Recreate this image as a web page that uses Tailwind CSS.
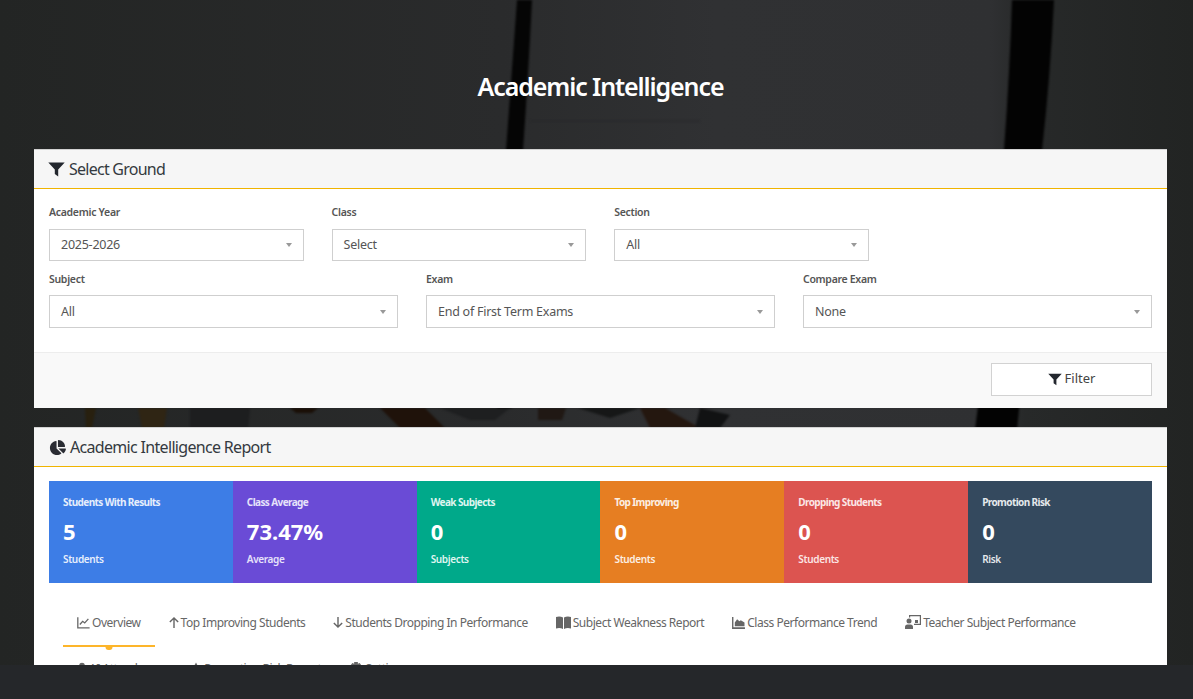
<!DOCTYPE html>
<html lang="en">
<head>
<meta charset="utf-8">
<title>Academic Intelligence</title>
<script src="https://cdn.jsdelivr.net/npm/@tailwindcss/browser@4"></script>
</head>
<body class="bg-[#25272a] font-['Noto_Sans',sans-serif] h-[699px] overflow-hidden">

<div class="relative h-[665px] overflow-hidden bg-[#2a2b2d]">
    <!-- backdrop photo stand-in -->
    <svg class="absolute inset-0 w-full h-full" viewBox="0 0 1193 665" preserveAspectRatio="none" aria-hidden="true">
        <defs>
            <linearGradient id="bg-fade" x1="0" y1="0" x2="1" y2="0">
                <stop offset="0" stop-color="#232524" />
                <stop offset="0.42" stop-color="#2a2b2c" />
                <stop offset="0.6" stop-color="#303133" />
                <stop offset="0.83" stop-color="#2f3032" />
                <stop offset="0.86" stop-color="#272929" />
                <stop offset="1" stop-color="#222423" />
            </linearGradient>
        </defs>
        <rect width="1193" height="665" fill="url(#bg-fade)" />
        <g class="blur-[1px]">
            <path d="M517 0H532Q528 80 523 150L512 408H497L506 150Q512 70 517 0Z" fill="#050505" />
            <path d="M1012 0H1054Q1050 80 1042 150Q1030 300 1017 430H975Q992 300 1004 150Q1010 70 1012 0Z" fill="#030303" />
            <path d="M530 121H700" stroke="#262728" stroke-width="1" />
            <path d="M85 408H96L92 428H86Z" fill="#28200f" />
            <path d="M138 408H167L164 428H142Z" fill="#2f2514" />
            <path d="M190 408H250L248 428H190Z" fill="#1d1e1f" />
            <path d="M290 408H318L312 413H296Z" fill="#1a0f07" />
            <path d="M380 408H425L445 428H400Z" fill="#1f120a" />
            <path d="M440 408H510L495 420H470Z" fill="#1e1f20" />
            <path d="M538 408H566L562 420H538Z" fill="#201814" />
            <path d="M578 408H640L610 418Z" fill="#161717" />
            <path d="M640 408H665L700 428H650Z" fill="#24170f" />
            <path d="M695 428H720L730 415L700 408Z" fill="#111213" />
        </g>
    </svg>

    <div class="relative pl-[34px] pr-[26px] pt-[68px]">
        <h1 class="text-center text-[25px] leading-[36px] font-semibold text-white tracking-[-1.1px] mb-[45px]">Academic Intelligence</h1>

        <section class="bg-white border-t border-[#d2d2d2] mb-[19px]">
            <header class="h-[39px] flex items-center gap-1 px-[14px] bg-[#f6f6f6] border-b border-[#f0b400]">
                <svg class="w-[17px] h-[15px] text-[#23272e]" viewBox="0 0 17 15" fill="currentColor"><path d="M.3 .5H16.700L10.200 7.500V14.500L6.800 12V7.500Z"/></svg>
                <span class="text-[16px] text-[#343a40] tracking-[-0.75px]">Select Ground</span>
            </header>

            <div class="px-[15px] pt-[16px] pb-[24px] border-b border-[#ededed]">
                <div class="flex gap-[28px] mb-[11px]">
                    <div class="w-[254.600px]">
                        <label class="block text-[10.500px] leading-[14px] font-semibold text-[#555] mb-[10px] tracking-[-0.3px]">Academic Year</label>
                        <div class="h-[32px] border border-[#cfcfcf] flex items-center justify-between pl-[11px] pr-[11px] text-[12.500px] text-[#555] tracking-[-0.25px]">2025-2026<span class="w-0 h-0 border-x-[3.500px] border-x-transparent border-t-[4px] border-t-[#999]"></span></div>
                    </div>
                    <div class="w-[254.600px]">
                        <label class="block text-[10.500px] leading-[14px] font-semibold text-[#555] mb-[10px] tracking-[-0.3px]">Class</label>
                        <div class="h-[32px] border border-[#cfcfcf] flex items-center justify-between pl-[11px] pr-[11px] text-[12.500px] text-[#555] tracking-[-0.25px]">Select<span class="w-0 h-0 border-x-[3.500px] border-x-transparent border-t-[4px] border-t-[#999]"></span></div>
                    </div>
                    <div class="w-[254.600px]">
                        <label class="block text-[10.500px] leading-[14px] font-semibold text-[#555] mb-[10px] tracking-[-0.3px]">Section</label>
                        <div class="h-[32px] border border-[#cfcfcf] flex items-center justify-between pl-[11px] pr-[11px] text-[12.500px] text-[#555] tracking-[-0.25px]">All<span class="w-0 h-0 border-x-[3.500px] border-x-transparent border-t-[4px] border-t-[#999]"></span></div>
                    </div>
                </div>
                <div class="grid grid-cols-3 gap-[28px]">
                    <div>
                        <label class="block text-[10.500px] leading-[14px] font-semibold text-[#555] mb-[9px] tracking-[-0.3px]">Subject</label>
                        <div class="h-[33px] border border-[#cfcfcf] flex items-center justify-between pl-[11px] pr-[11px] pt-[1px] text-[12.500px] text-[#555] tracking-[-0.25px]">All<span class="w-0 h-0 border-x-[3.500px] border-x-transparent border-t-[4px] border-t-[#999]"></span></div>
                    </div>
                    <div>
                        <label class="block text-[10.500px] leading-[14px] font-semibold text-[#555] mb-[9px] tracking-[-0.3px]">Exam</label>
                        <div class="h-[33px] border border-[#cfcfcf] flex items-center justify-between pl-[11px] pr-[11px] pt-[1px] text-[12.500px] text-[#555] tracking-[-0.25px]">End of First Term Exams<span class="w-0 h-0 border-x-[3.500px] border-x-transparent border-t-[4px] border-t-[#999]"></span></div>
                    </div>
                    <div>
                        <label class="block text-[10.500px] leading-[14px] font-semibold text-[#555] mb-[9px] tracking-[-0.3px]">Compare Exam</label>
                        <div class="h-[33px] border border-[#cfcfcf] flex items-center justify-between pl-[11px] pr-[11px] pt-[1px] text-[12.500px] text-[#555] tracking-[-0.25px]">None<span class="w-0 h-0 border-x-[3.500px] border-x-transparent border-t-[4px] border-t-[#999]"></span></div>
                    </div>
                </div>
            </div>

            <footer class="h-[55px] bg-[#f9f9f9] flex items-start justify-end px-[15px] pt-[10px]">
                <button type="button" class="w-[161px] h-[33px] bg-white border border-[#d2d2d2] flex items-center justify-center gap-[3px] pb-[1px] text-[13px] text-[#444]">
                    <svg class="w-[14px] h-[13px] text-[#23272e]" viewBox="0 0 17 15" fill="currentColor"><path d="M.3 .5H16.700L10.200 7.500V14.500L6.800 12V7.500Z"/></svg>
                    Filter
                </button>
            </footer>
        </section>

        <section class="bg-white border-t border-[#d2d2d2]">
            <header class="h-[39px] flex items-center gap-1 px-[15px] bg-[#f6f6f6] border-b border-[#f0b400]">
                <svg class="w-[17px] h-[17px] text-[#2a2c33]" viewBox="0 0 576 512" fill="currentColor"><path d="M304 240V16.600c0-9 7-16.600 16-16.600C443.700 0 544 100.300 544 224c0 9-7.600 16-16.600 16H304zM32 272C32 150.700 122.100 50.300 239 34.300c9.200-1.300 17 6.100 17 15.400V288l156.500 156.500c6.700 6.700 6.200 17.700-1.500 23.100C371.800 495.600 323.800 512 272 512c-132.500 0-240-107.400-240-240zm526.400 16c9.300 0 16.600 7.800 15.400 17-7.700 55.900-34.600 105.600-73.900 142.300-6 5.600-15.400 5.200-21.200-.7L320 288h238.400z"/></svg>
                <span class="text-[16px] text-[#343a40] tracking-[-0.68px]">Academic Intelligence Report</span>
            </header>

            <div class="px-[15px] pt-[14px]">
                <div class="grid grid-cols-6 h-[102px] text-white">
                    <div class="bg-[#3d7de6] px-[14px] pt-[14px]">
                        <p class="text-[10px] leading-[15px] font-bold text-[#e6eefc] tracking-[-0.6px]">Students With Results</p>
                        <p class="text-[22px] leading-[30px] font-bold mt-[6px]">5</p>
                        <p class="text-[10px] leading-[14px] font-semibold text-[#e6eefc] mt-[6px] tracking-[-0.35px]">Students</p>
                    </div>
                    <div class="bg-[#6a4bd6] px-[14px] pt-[14px]">
                        <p class="text-[10px] leading-[15px] font-bold text-[#e6e2fa] tracking-[-0.6px]">Class Average</p>
                        <p class="text-[22px] leading-[30px] font-bold mt-[6px]">73.47%</p>
                        <p class="text-[10px] leading-[14px] font-semibold text-[#e6e2fa] mt-[6px] tracking-[-0.35px]">Average</p>
                    </div>
                    <div class="bg-[#00a98a] px-[14px] pt-[14px]">
                        <p class="text-[10px] leading-[15px] font-bold text-[#dff5f0] tracking-[-0.6px]">Weak Subjects</p>
                        <p class="text-[22px] leading-[30px] font-bold mt-[6px]">0</p>
                        <p class="text-[10px] leading-[14px] font-semibold text-[#dff5f0] mt-[6px] tracking-[-0.35px]">Subjects</p>
                    </div>
                    <div class="bg-[#e67e22] px-[14px] pt-[14px]">
                        <p class="text-[10px] leading-[15px] font-bold text-[#fcefe2] tracking-[-0.6px]">Top Improving</p>
                        <p class="text-[22px] leading-[30px] font-bold mt-[6px]">0</p>
                        <p class="text-[10px] leading-[14px] font-semibold text-[#fcefe2] mt-[6px] tracking-[-0.35px]">Students</p>
                    </div>
                    <div class="bg-[#dc5450] px-[14px] pt-[14px]">
                        <p class="text-[10px] leading-[15px] font-bold text-[#fbe6e5] tracking-[-0.6px]">Dropping Students</p>
                        <p class="text-[22px] leading-[30px] font-bold mt-[6px]">0</p>
                        <p class="text-[10px] leading-[14px] font-semibold text-[#fbe6e5] mt-[6px] tracking-[-0.35px]">Students</p>
                    </div>
                    <div class="bg-[#34495e] px-[14px] pt-[14px]">
                        <p class="text-[10px] leading-[15px] font-bold text-[#e4e8ec] tracking-[-0.6px]">Promotion Risk</p>
                        <p class="text-[22px] leading-[30px] font-bold mt-[6px]">0</p>
                        <p class="text-[10px] leading-[14px] font-semibold text-[#e4e8ec] mt-[6px] tracking-[-0.35px]">Risk</p>
                    </div>
                </div>

                <nav class="flex flex-wrap gap-y-[8px] pl-[14px] pt-[26px] text-[12px] text-[#666] tracking-[-0.47px]">
                    <a class="relative h-[38px] px-[14px] flex items-start gap-[2px] pt-[5px] border-b-2 border-[#fdb52a]">
                        <svg class="w-[13px] h-[13px] mt-[2px]" viewBox="0 0 16 16" fill="none" stroke="currentColor" stroke-width="1.600"><path d="M1 1.500V14.500H15.500"/><path d="M3.500 10.500L7 6.500L9.500 8.500L14 3.500"/></svg>
                        Overview
                        <span class="absolute left-1/2 -bottom-[5px] -translate-x-1/2 w-[7px] h-[3px] rounded-b-sm bg-[#fdb52a]"></span>
                    </a>
                    <a class="h-[38px] px-[14px] flex items-start gap-[2px] pt-[5px]">
                        <svg class="w-[10px] h-[13px] mt-[2px]" viewBox="0 0 12 14" fill="none" stroke="currentColor" stroke-width="1.700"><path d="M6 13.500V1.500M1 6.500L6 1.500L11 6.500"/></svg>
                        Top Improving Students
                    </a>
                    <a class="h-[38px] px-[14px] flex items-start gap-[2px] pt-[5px]">
                        <svg class="w-[10px] h-[13px] mt-[2px]" viewBox="0 0 12 14" fill="none" stroke="currentColor" stroke-width="1.700"><path d="M6 .500V12.500M1 7.500L6 12.500L11 7.500"/></svg>
                        Students Dropping In Performance
                    </a>
                    <a class="h-[38px] px-[14px] flex items-start gap-[2px] pt-[5px]">
                        <svg class="w-[15px] h-[13px] mt-[2px]" viewBox="0 0 15 13" fill="currentColor"><path d="M0 1Q4 0 7 1.500V13Q4 11.500 0 12.500ZM8 1.500Q11 0 15 1V12.500Q11 11.500 8 13Z"/></svg>
                        Subject Weakness Report
                    </a>
                    <a class="h-[38px] px-[14px] flex items-start gap-[2px] pt-[5px]">
                        <svg class="w-[13px] h-[12px] mt-[3px]" viewBox="0 0 14 13" fill="currentColor"><path d="M0 0H1.500V11H14V13H0Z"/><path d="M3 10V6L5.500 2.500L8 4.500L9.500 3.500L13.500 6V10Z"/></svg>
                        Class Performance Trend
                    </a>
                    <a class="h-[38px] px-[14px] flex items-start gap-[2px] pt-[5px]">
                        <svg class="w-[16px] h-[14px] mt-[1px]" viewBox="0 0 16 14" fill="currentColor"><circle cx="4" cy="6" r="2.500"/><path d="M0 14V12Q0 9.500 2.500 9.500H5.500Q8 9.500 8 12V14Z"/><path d="M4 0H16V10H9V8.800H14.800V1.200H5.200V2.500H4Z"/><path d="M10 5H13V8H10Z"/></svg>
                        Teacher Subject Performance
                    </a>
                    <a class="h-[38px] px-[14px] flex items-start gap-[2px] pt-[5px]">
                        <svg class="w-[10px] h-[13px] mt-[2px]" viewBox="0 0 12 14" fill="currentColor"><circle cx="6" cy="3.500" r="3.500"/><path d="M0 14V11Q0 8 3 8H9Q12 8 12 11V14Z"/></svg>
                        AI Attendance
                    </a>
                    <a class="h-[38px] px-[14px] flex items-start gap-[2px] pt-[5px]">
                        <svg class="w-[12px] h-[13px] mt-[2px]" viewBox="0 0 14 14" fill="currentColor"><path d="M7 0L14 13H0Z"/></svg>
                        Promotion Risk Report
                    </a>
                    <a class="h-[38px] px-[14px] flex items-start gap-[2px] pt-[5px]">
                        <svg class="w-[14px] h-[13px] mt-[2px]" viewBox="0 0 14 14" fill="currentColor"><path d="M5 0H9V2L11 1L13 4L11.500 5.500V8.500L13 10L11 13L9 12V14H5V12L3 13L1 10L2.500 8.500V5.500L1 4L3 1L5 2Z"/></svg>
                        Settings
                    </a>
                </nav>
            </div>
        </section>
    </div>
</div>

</body>
</html>
